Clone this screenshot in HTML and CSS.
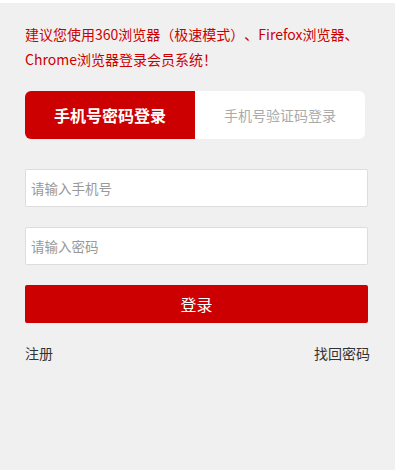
FILE: index.html
```html
<!DOCTYPE html>
<html lang="zh-CN">
<head>
    <meta charset="UTF-8">
    <title>会员登录</title>
    <link rel="stylesheet" href="styles.css">
</head>
<body>
    <div class="login-page">
        <p class="notice">建议您使用360浏览器（极速模式）、Firefox浏览器、Chrome浏览器登录会员系统！</p>

        <div class="tabs">
            <div class="tab active">手机号密码登录</div>
            <div class="tab">手机号验证码登录</div>
        </div>

        <form class="login-form">
            <input type="text" class="field" placeholder="请输入手机号">
            <input type="password" class="field" placeholder="请输入密码">
            <button type="button" class="submit">登录</button>
        </form>

        <div class="links">
            <a href="#">注册</a>
            <a href="#">找回密码</a>
        </div>
    </div>
</body>
</html>
```

FILE: styles.css
```css
* {
    box-sizing: border-box;
}

body {
    margin: 0;
    background: #fff;
    font-family: "Noto Sans CJK SC", "Noto Sans", sans-serif;
    text-spacing-trim: space-all;
}

.login-page {
    margin-top: 3px;
    min-height: 467px;
    background: #f0f0f0;
    padding: 19px 27px 0 25px;
}

.notice {
    margin: 0;
    color: #cc0000;
    font-size: 14px;
    line-height: 25px;
}

.tabs {
    display: flex;
    width: 340px;
    height: 48px;
    margin-top: 19px;
    border-radius: 6px;
    overflow: hidden;
    background: #fff;
}

.tab {
    flex: 1;
    display: flex;
    align-items: center;
    justify-content: center;
    color: #aaa;
    font-size: 14px;
}

.tab.active {
    background: #cc0000;
    color: #fff;
    font-size: 16px;
    font-weight: bold;
}

.login-form {
    display: flex;
    flex-direction: column;
    gap: 20px;
    margin-top: 30px;
}

.field {
    height: 38px;
    border: 1px solid #ddd;
    border-radius: 2px;
    background: #fff;
    padding: 0 5px;
    font-family: inherit;
    font-size: 13.5px;
    color: #333;
    outline: none;
}

.field::placeholder {
    color: #999;
}

.submit {
    height: 38px;
    border: none;
    border-radius: 2px;
    background: #cc0000;
    color: #fff;
    font-family: inherit;
    font-size: 16px;
    cursor: pointer;
}

.links {
    display: flex;
    justify-content: space-between;
    margin-top: 20px;
    margin-right: -2px;
    font-size: 14px;
    line-height: 20px;
}

.links a {
    color: #333;
    text-decoration: none;
}
```
